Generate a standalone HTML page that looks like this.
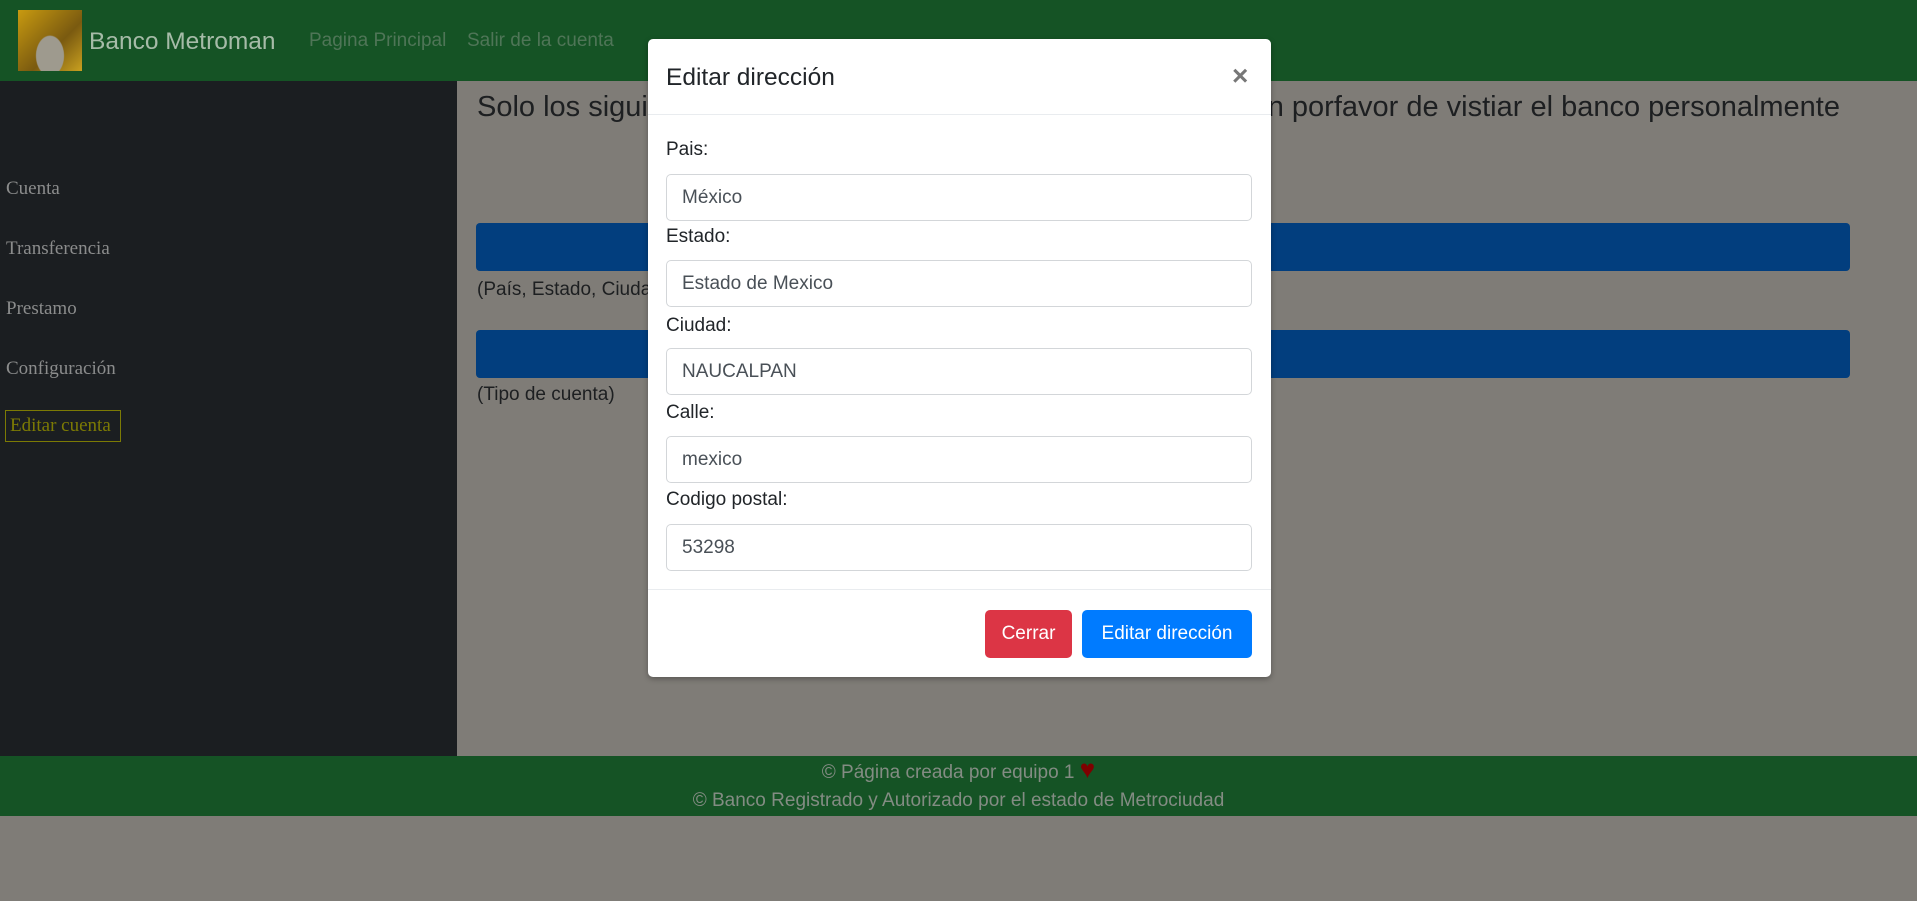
<!DOCTYPE html>
<html><head><meta charset="utf-8"><style>
*{box-sizing:border-box;margin:0;padding:0}
body{width:1917px;height:901px;overflow:hidden;background:#7f7c77;font-family:"Liberation Sans",sans-serif;position:relative}
.a{position:absolute;white-space:nowrap}
.nav{left:0;top:0;width:1917px;height:81px;background:#155325}
.side{left:0;top:81px;width:457px;height:675px;background:#1b1e21}
.sl{font-family:"Liberation Serif",serif;font-size:19px;color:#8b8c8c;left:6px}
.foot{left:0;top:756px;width:1917px;height:60px;background:#155325}
.modal{left:648px;top:39px;width:623px;height:638px;background:#fff;border-radius:5px;box-shadow:0 2px 6px rgba(0,0,0,.3)}
.lab{font-size:19px;color:#212529;left:18px}
.inp{left:18px;width:586px;height:47px;border:1px solid #d3d6d9;border-radius:5px;font-size:19px;color:#495057;padding:12px 15px;line-height:21px}
.btn{height:48px;border-radius:5px;color:#fff;font-size:19px;text-align:center;line-height:48px}
</style></head><body>
<div class="a nav"></div>
<div class="a" style="left:18px;top:10px;width:64px;height:61px;background:radial-gradient(ellipse at 50% 75%,#9e9a8e 0 30%,transparent 32%),linear-gradient(135deg,#c89a10,#7a5a10 60%,#c9a020)"></div>
<div class="a" style="left:89px;top:28px;font-size:24.5px;color:#a6bba8">Banco Metroman</div>
<div class="a" style="left:309px;top:30px;font-size:19px;color:#4f7557">Pagina Principal</div>
<div class="a" style="left:467px;top:30px;font-size:19px;color:#4f7557">Salir de la cuenta</div>
<div class="a side"></div>
<div class="a sl" style="top:178px">Cuenta</div>
<div class="a sl" style="top:238px">Transferencia</div>
<div class="a sl" style="top:298px">Prestamo</div>
<div class="a sl" style="top:358px">Configuración</div>
<div class="a" style="left:5px;top:410px;width:116px;height:32px;border:1px solid #7c7a04;color:#7c7a04;font-family:'Liberation Serif',serif;font-size:19px;padding:4px 4px">Editar cuenta</div>
<div class="a" style="left:477px;top:91px;font-size:29px;font-weight:300;color:#1d1f21">Solo los siguie</div>
<div class="a" style="right:77px;top:91px;font-size:29px;font-weight:300;color:#1d1f21">on porfavor de vistiar el banco personalmente</div>
<div class="a" style="left:476px;top:223px;width:1374px;height:48px;background:#023e7e;border-radius:4px"></div>
<div class="a" style="left:477px;top:279px;font-size:19px;color:#1d1f21">(País, Estado, Ciudad</div>
<div class="a" style="left:476px;top:330px;width:1374px;height:48px;background:#023e7e;border-radius:4px"></div>
<div class="a" style="left:477px;top:384px;font-size:19px;color:#1d1f21">(Tipo de cuenta)</div>
<div class="a foot"></div>
<div class="a" style="left:0;width:1917px;text-align:center;top:760px;font-size:19px;color:#838c83">© Página creada por equipo 1 <span style="color:#7d0000;font-size:26px;line-height:19px">♥</span></div>
<div class="a" style="left:0;width:1917px;text-align:center;top:790px;font-size:19px;color:#838c83">© Banco Registrado y Autorizado por el estado de Metrociudad</div>
<div class="a modal">
 <div class="a" style="left:18px;top:25px;font-size:24.5px;color:#212529">Editar dirección</div>
 <div class="a" style="left:584px;top:21px;font-size:28px;font-weight:bold;color:#777">×</div>
 <div class="a" style="left:0;top:75px;width:623px;height:1px;background:#e9ecef"></div>
 <div class="a lab" style="top:100px">Pais:</div>
 <div class="a inp" style="top:135px">México</div>
 <div class="a lab" style="top:187px">Estado:</div>
 <div class="a inp" style="top:221px">Estado de Mexico</div>
 <div class="a lab" style="top:276px">Ciudad:</div>
 <div class="a inp" style="top:309px">NAUCALPAN</div>
 <div class="a lab" style="top:363px">Calle:</div>
 <div class="a inp" style="top:397px">mexico</div>
 <div class="a lab" style="top:450px">Codigo postal:</div>
 <div class="a inp" style="top:485px">53298</div>
 <div class="a" style="left:0;top:550px;width:623px;height:1px;background:#e9ecef"></div>
 <div class="a btn" style="left:337px;top:571px;width:87px;background:#dc3545">Cerrar</div>
 <div class="a btn" style="left:434px;top:571px;width:170px;background:#007bff">Editar dirección</div>
</div>
</body></html>
